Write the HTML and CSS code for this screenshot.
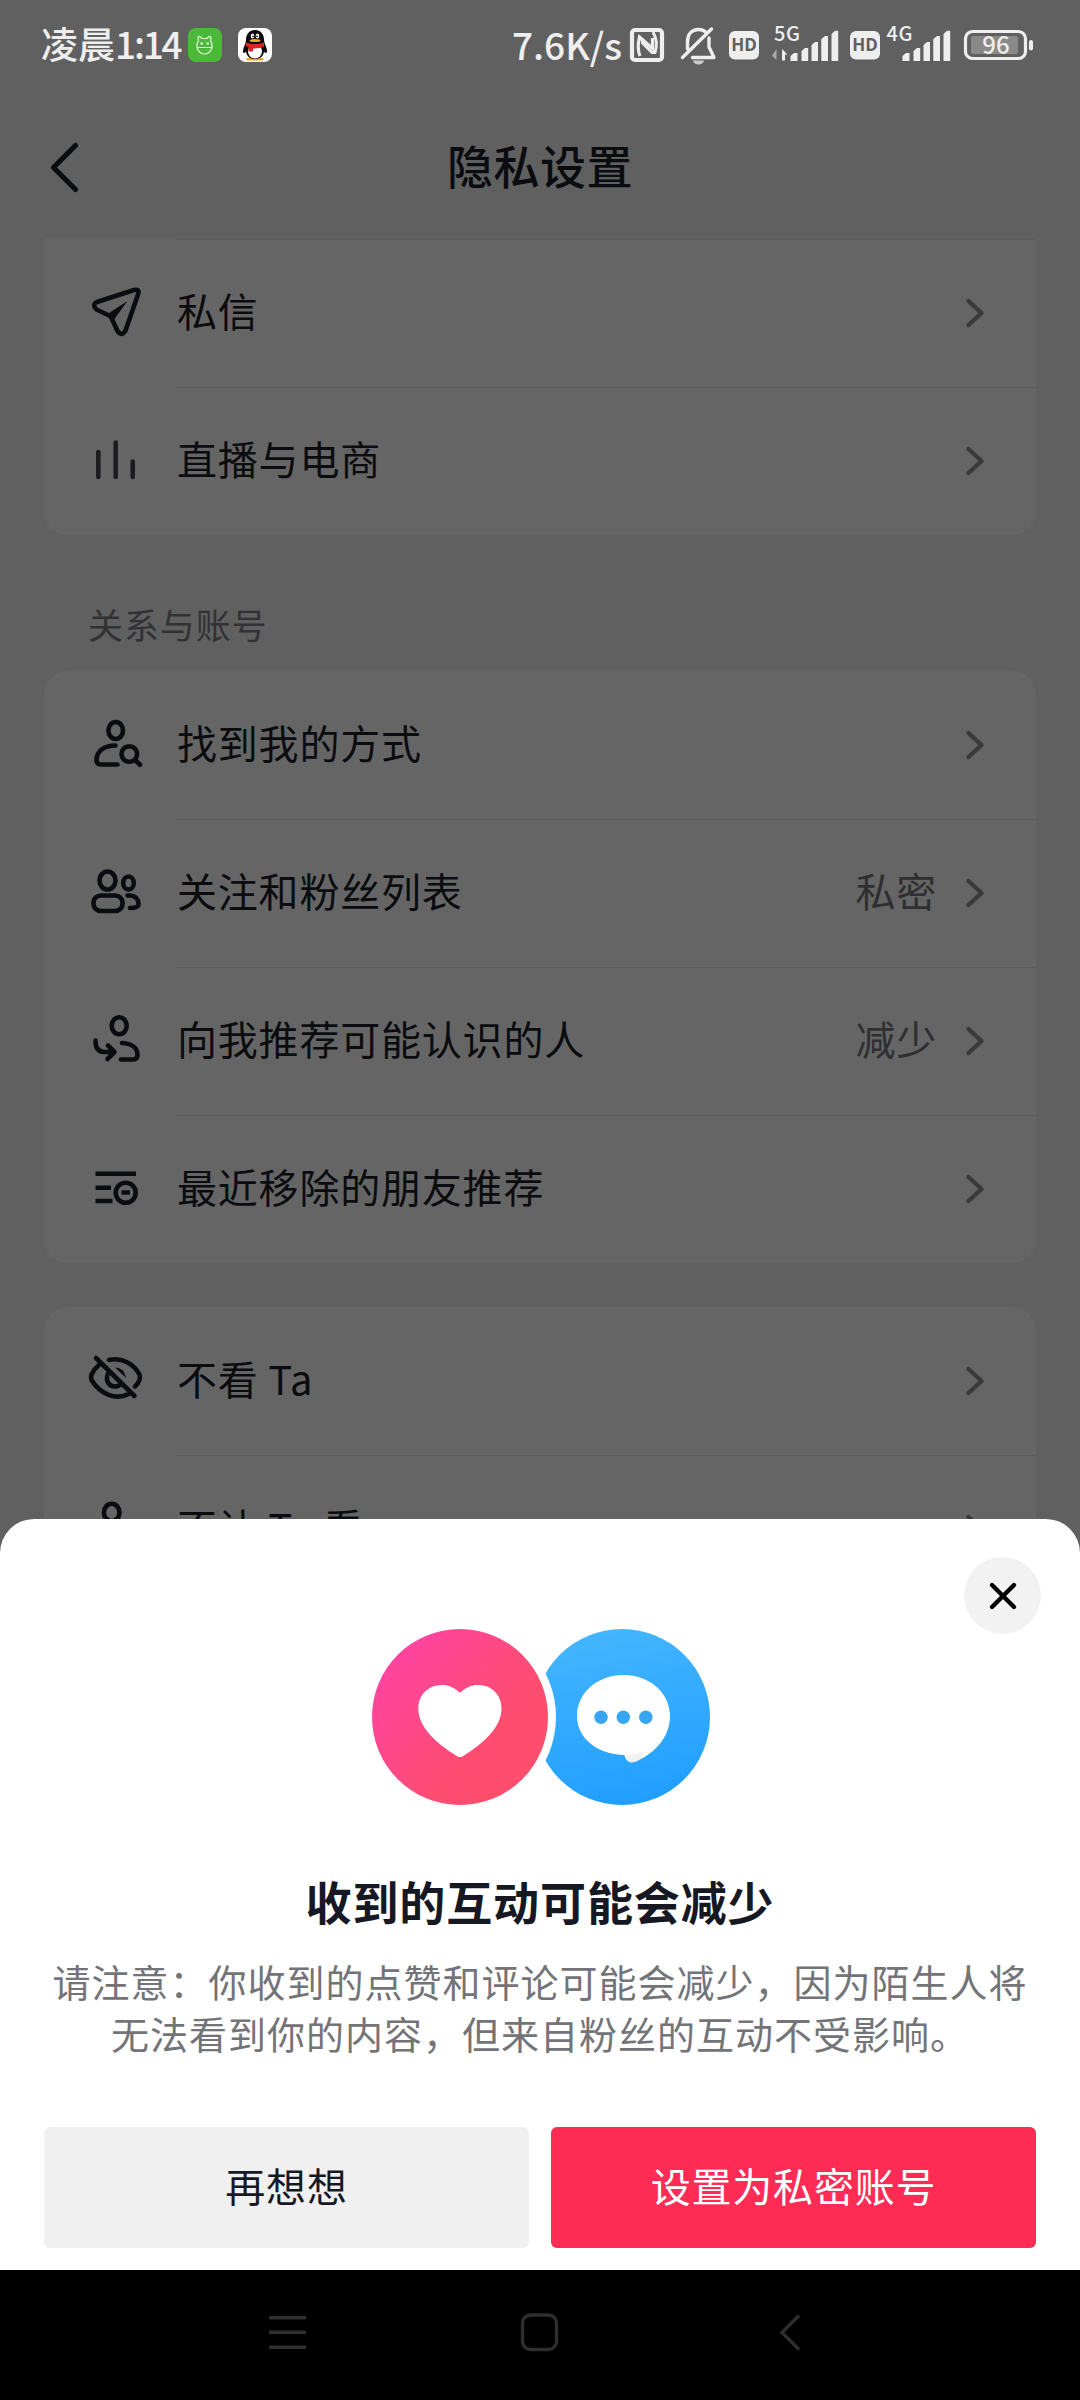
FILE: index.html
```html
<!DOCTYPE html>
<html lang="zh-CN">
<head>
<meta charset="utf-8">
<title>隐私设置</title>
<link rel="stylesheet" href="styles.css">
</head>
<body>
<div class="phone">
  <header class="status">
    <span class="time">凌晨<b>1:14</b></span>
    <svg class="app-icons" width="84" height="34" viewBox="188 28 84 34">
      <rect x="188" y="28" width="34" height="34" rx="8" fill="#4cb93a"/>
      <g fill="none" stroke="#e4fbdc" stroke-width="1.2">
        <path d="M198.500 40.500L198 37.500Q199 35.500 200.500 37L202 38.500H207L208.500 37Q210 35.500 211 37.500L210.500 40.500Q213 45 211.500 49Q209 54 204.500 54Q200 54 197.500 49Q196 45 198.500 40.500ZM197 47.500H212"/>
        <path d="M200.500 43.500h2.400M206.500 43.500h2.400" stroke-width="2"/>
      </g>
      <rect x="238" y="28" width="34" height="34" rx="8" fill="#fff"/>
      <path d="M246 59Q247 57 255 58.500Q263 57 264 59L263 60.500H247Z" fill="#efa52f"/>
      <path d="M255 30C249 30 246 34.500 246 40C246 44 243 47 243 51C243 53 244 54 246 51.500C247 57 250 59 255 59C260 59 263 57 264 51.500C266 54 267 53 267 51C267 47 264 44 264 40C264 34.500 261 30 255 30Z" fill="#080808"/>
      <ellipse cx="255" cy="51.500" rx="7" ry="7" fill="#fff"/>
      <path d="M246 42.500Q255 46 264 42.500V46.500Q259 49 253 48.500V51.500H248.500V47L245.500 46Z" fill="#dd2427"/>
      <ellipse cx="252.500" cy="36" rx="1.800" ry="2.600" fill="#fff"/><ellipse cx="257.500" cy="36" rx="1.800" ry="2.600" fill="#fff"/>
      <circle cx="253" cy="36.400" r=".8"/><circle cx="257" cy="36.400" r=".8"/>
      <ellipse cx="255" cy="40.500" rx="5.500" ry="1.600" fill="#f0a52b"/>
    </svg>
    <span class="speed">7.6K/s</span>
    <svg class="indicators" width="140" height="90" viewBox="628 0 140 90">
      <rect x="632" y="30" width="30" height="30" rx="3" fill="none" stroke="#eee" stroke-width="4.200"/>
      <path d="M640 56C637.500 50 638 43 639.500 37L652.500 48.500V38" fill="none" stroke="#eee" stroke-width="3.200"/>
      <path d="M642.500 38.500V43L652 52.500H655C657.500 45 656.500 38 653 32" fill="none" stroke="#eee" stroke-width="3"/>
      <g fill="none" stroke="#eee" stroke-width="3.400" stroke-linecap="round" stroke-linejoin="round">
        <path d="M687.500 49V42C687.500 34 692 29.500 698.500 29.500C701 29.500 704 30.500 705.500 32M709 38V47L714 57.500H692.500"/>
        <path d="M711.500 29L682.500 57.500"/>
      </g>
      <path d="M693 60.500H704Q703 64.500 698.500 64.500T693 60.500Z" fill="#ccc"/>
      <rect x="729" y="31" width="30" height="28.500" rx="6" fill="#eee"/>
      <text class="hd" x="744" y="51" text-anchor="middle">HD</text>
    </svg>
    <svg class="signal" width="270" height="90" viewBox="768 0 270 90">
      <text class="net" x="774" y="41" textLength="26">5G</text>
      <path d="M776.500 49V60L772 55.500Z" fill="#aaa"/><path d="M782 60.500V49L787.500 54.500H785V60.500Z" fill="#eee"/>
      <path fill="#eee" d="M790.500 61V56L794 53H797.500V61ZM801.500 61V51L805 48H808.200V61ZM811.500 61V45L815 42H818V61ZM821.300 61V39L825 36H828V61ZM831.500 61V34L835 30.700H838.200V61Z"/>
      <rect x="850" y="31" width="30" height="28.500" rx="6" fill="#eee"/>
      <text class="hd" x="865" y="51" text-anchor="middle">HD</text>
      <text class="net" x="886.500" y="41" textLength="26">4G</text>
      <path fill="#eee" transform="translate(112 0)" d="M790.500 61V56L794 53H797.500V61ZM801.500 61V51L805 48H808.200V61ZM811.500 61V45L815 42H818V61ZM821.300 61V39L825 36H828V61ZM831.500 61V34L835 30.700H838.200V61Z"/>
      <rect x="965.500" y="31.500" width="60" height="27" rx="7" fill="none" stroke="#eee" stroke-width="3.200"/>
      <rect x="971" y="36" width="47" height="18" rx="2.500" fill="#898989"/>
      <rect x="1029" y="40" width="4" height="10.500" rx="2" fill="#eee"/>
      <text class="level" x="996" y="54" text-anchor="middle">96</text>
    </svg>
  </header>

  <div class="topbar">
    <svg class="back" width="36" height="56" viewBox="46 140 36 56"><path d="M75.500 145.500L53.500 167.500L75.500 189.500"/></svg>
    <h1>隐私设置</h1>
  </div>

  <main>
    <section class="card continued">
      <div class="row">
        <svg class="icon" viewBox="80 277 72 72"><path d="M97 302L134 290Q140 288.500 138 294.500L125.500 330.500Q122 337 117.500 331L112 319Q111.500 316.500 109 315.500L96.500 309.500Q91.500 305 97 302Z"/><path class="solid" d="M107.500 314L127.500 301L113 321Z"/></svg>
        <div class="body"><span>私信</span><svg class="go" viewBox="0 0 22 34"><path d="M4.500 5L17.500 17L4.500 29"/></svg></div>
      </div>
      <div class="row">
        <svg class="icon faint" viewBox="80 425 72 72"><path d="M98.300 452V477M115.700 442.500V477M132.700 461.500V477"/></svg>
        <div class="body"><span>直播与电商</span><svg class="go" viewBox="0 0 22 34"><path d="M4.500 5L17.500 17L4.500 29"/></svg></div>
      </div>
    </section>

    <h2>关系与账号</h2>

    <section class="card">
      <div class="row">
        <svg class="icon" viewBox="80 709 72 72"><ellipse cx="115.700" cy="730.500" rx="7.300" ry="8.500"/><path d="M115.500 745.500C103 745.500 96.500 752 96.500 760Q96.500 764.500 101 764.500H117.500"/><circle cx="129.300" cy="754" r="7.800"/><path d="M135 760L140 764.700"/></svg>
        <div class="body"><span>找到我的方式</span><svg class="go" viewBox="0 0 22 34"><path d="M4.500 5L17.500 17L4.500 29"/></svg></div>
      </div>
      <div class="row">
        <svg class="icon" viewBox="80 857 72 72"><ellipse cx="107.500" cy="880.500" rx="8" ry="9"/><ellipse cx="128.500" cy="883" rx="5.300" ry="6.500"/><rect x="93.500" y="895.500" width="29" height="15.500" rx="7.500" ry="7"/><path d="M127.500 895.500H130Q138.500 896 138.500 904.500Q138.500 908 130 908"/></svg>
        <div class="body"><span>关注和粉丝列表</span><em>私密</em><svg class="go" viewBox="0 0 22 34"><path d="M4.500 5L17.500 17L4.500 29"/></svg></div>
      </div>
      <div class="row">
        <svg class="icon" viewBox="80 1005 72 72"><ellipse cx="119.200" cy="1025.700" rx="7.500" ry="8.500"/><path d="M95.500 1040.500C95.500 1047 97.500 1052 104 1052H113.500M108 1045.500L114.500 1052L107.500 1059"/><path d="M122 1043C132 1043.500 137.500 1048 137.500 1055Q137.500 1059.500 133 1059.500H121"/></svg>
        <div class="body"><span>向我推荐可能认识的人</span><em>减少</em><svg class="go" viewBox="0 0 22 34"><path d="M4.500 5L17.500 17L4.500 29"/></svg></div>
      </div>
      <div class="row">
        <svg class="icon butt" viewBox="80 1153 72 72"><path d="M95.500 1173.700H136M95.500 1187.700H111M95.500 1201H112.500M121.500 1192.500H130"/><circle cx="125.700" cy="1192.700" r="10"/></svg>
        <div class="body"><span>最近移除的朋友推荐</span><svg class="go" viewBox="0 0 22 34"><path d="M4.500 5L17.500 17L4.500 29"/></svg></div>
      </div>
    </section>

    <section class="card">
      <div class="row">
        <svg class="icon" viewBox="80 1345 72 72"><path d="M96 1358L134.500 1396M99 1365Q94 1369 91.500 1374.500Q90.500 1377.500 91.500 1380C100 1394 116 1401 129.500 1393.500M109 1360C122 1357 134 1364 139.500 1374.500Q140.500 1377.500 139.500 1380Q138 1384 135 1386.500M108 1373.500C105 1381 109 1387 116 1386.500Q119 1386 121 1384"/><path class="solid" d="M115 1367.500Q124.500 1367.500 126 1378Z"/></svg>
        <div class="body"><span>不看 Ta</span><svg class="go" viewBox="0 0 22 34"><path d="M4.500 5L17.500 17L4.500 29"/></svg></div>
      </div>
      <div class="row">
        <svg class="icon" viewBox="80 1493 72 72"><ellipse cx="111.700" cy="1512.500" rx="7.800" ry="8.700"/><path d="M94 1546Q94 1528 111.700 1528T129 1546Z"/></svg>
        <div class="body"><span>不让 Ta 看</span><svg class="go" viewBox="0 0 22 34"><path d="M4.500 5L17.500 17L4.500 29"/></svg></div>
      </div>
    </section>
  </main>

  <section class="sheet">
    <button class="close" aria-label="关闭"><svg width="36" height="36" viewBox="0 0 36 36"><path d="M7 7L29 29M29 7L7 29"/></svg></button>
    <svg class="hero" width="340" height="178" viewBox="370 1628 340 178">
      <defs>
        <linearGradient id="pink" x1=".1" y1=".2" x2=".8" y2=".8"><stop offset="0" stop-color="#ff449f"/><stop offset=".75" stop-color="#ff4d71"/><stop offset="1" stop-color="#ff4d6d"/></linearGradient>
        <linearGradient id="blue" x1=".4" y1="0" x2=".6" y2="1"><stop offset="0" stop-color="#44b5ff"/><stop offset="1" stop-color="#209eff"/></linearGradient>
      </defs>
      <circle cx="622" cy="1717" r="88" fill="url(#blue)"/>
      <circle cx="460" cy="1717" r="96" fill="#fff"/>
      <circle cx="460" cy="1717" r="88" fill="url(#pink)"/>
      <path d="M460 1692.700C454 1687.500 449 1685 442 1685C428 1685 418.300 1695 418.300 1708.500C418.300 1727 436 1743 456 1755.500Q460 1758.500 464 1755.500C484 1743 501.500 1727 501.500 1708.500C501.500 1695 492 1685 478 1685C471 1685 466 1687.500 460 1692.700Z" fill="#fff"/>
      <path d="M623.500 1675C650 1675 670 1693 670 1716C670 1737 655 1753 636 1761.500C631 1763.500 626 1762 624.500 1755C597 1754.500 577 1738 577 1716C577 1693 597 1675 623.500 1675Z" fill="#fff"/>
      <path d="M624.500 1755Q636 1755 642 1751Q646 1756 636 1761.500C631 1763.500 626 1762 624.500 1755Z" fill="#f2f2f2"/>
      <g fill="#38a5f3"><circle cx="601" cy="1717.300" r="6.700"/><circle cx="623.300" cy="1717.300" r="6.700"/><circle cx="645.800" cy="1717.300" r="6.700"/></g>
    </svg>
    <h3>收到的互动可能会减少</h3>
    <p>请注意：你收到的点赞和评论可能会减少，因为陌生人将<br>无法看到你的内容，但来自粉丝的互动不受影响。</p>
    <div class="actions">
      <button class="btn">再想想</button>
      <button class="btn primary">设置为私密账号</button>
    </div>
  </section>

  <nav class="navbar">
    <svg width="1080" height="130" viewBox="0 2270 1080 130">
      <path d="M269 2317.700H306M269 2332.300H306M269 2347.300H306"/>
      <rect x="522.500" y="2315" width="34" height="34.500" rx="8"/>
      <path d="M799 2315.500L782 2332.500L799 2349.500"/>
    </svg>
  </nav>
</div>
</body>
</html>
```
FILE: styles.css
```css
* { box-sizing: border-box; }
body {
  margin: 0;
  font-family: "Noto Sans CJK SC", sans-serif;
}
h1, h2, h3, p { margin: 0; font-weight: 400; }
button { border: 0; padding: 0; font: inherit; }
svg { display: block; flex: none; }

.phone {
  position: relative;
  width: 1080px;
  height: 2400px;
  overflow: hidden;
  background: #606060;
  color: #0b0c10;
}

.status {
  display: flex;
  align-items: center;
  height: 90px;
  padding-left: 41px;
  color: #eee;
  font-weight: 500;
  white-space: nowrap;
}
.time { width: 147px; padding-bottom: 4px; font-size: 37px; }
.time b { font-weight: 500; letter-spacing: -2.2px; }
.speed {
  width: 116px;
  margin-left: 240px;
  padding-bottom: 3px;
  font-size: 37px;
}
.hd { font: 700 17px "Open Sans", sans-serif; fill: #606060; }
.net { font: 500 20px "Noto Sans CJK SC", sans-serif; fill: #eee; }
.level { font: 500 24px "Noto Sans CJK SC", sans-serif; fill: #eee; }

.topbar {
  display: grid;
  grid-template-columns: 46px 36px 1fr 82px;
  align-items: center;
  height: 149px;
  padding-top: 6px;
}
.back { grid-column: 2; }
.back path { fill: none; stroke: #0b0c10; stroke-width: 5.2; stroke-linecap: round; stroke-linejoin: round; }
h1 {
  padding-bottom: 7px;
  font-size: 46px;
  line-height: 60px;
  font-weight: 500;
  letter-spacing: 0.5px;
  text-align: center;
}

main { padding: 0 44px; }
.card {
  background: #656565;
  border-radius: 24px;
}
.card + .card { margin-top: 44px; }
.card.continued { border-radius: 0 0 24px 24px; }
.row { display: flex; align-items: center; height: 148px; padding-left: 36px; }
.icon {
  width: 72px;
  height: 72px;
  margin-right: 24px;
  fill: none;
  stroke: #0b0c10;
  stroke-width: 4.6;
  stroke-linecap: round;
  stroke-linejoin: round;
}
.icon.faint { stroke: #1c1c1e; }
.icon.butt { stroke-linecap: butt; }
.icon .solid { fill: #0b0c10; stroke: none; }
.body {
  flex: 1;
  display: flex;
  align-items: center;
  height: 148px;
  padding: 0 50px 1px 1px;
  border-top: 1px solid #5b5b5b;
  font-size: 40px;
  letter-spacing: 0.8px;
}
.card:not(.continued) .row:first-child .body { border-top-color: transparent; }
.body span { flex: 1; padding-bottom: 6px; }
.body em { font-style: normal; color: #2f2f31; margin-right: 27px; padding-bottom: 6px; }
.go { width: 22px; height: 34px; fill: none; stroke: #3a3a3b; stroke-width: 4.4; stroke-linecap: round; stroke-linejoin: round; }
h2 {
  height: 136px;
  padding: 64px 0 0 44px;
  font-size: 35px;
  line-height: 50px;
  letter-spacing: 0.9px;
  color: #323234;
}

.sheet {
  position: absolute;
  left: 0;
  right: 0;
  top: 1519px;
  height: 751px;
  display: flex;
  flex-direction: column;
  align-items: center;
  padding: 38px 44px 22px;
  background: #fff;
  border-radius: 34px 34px 0 0;
}
.close {
  align-self: flex-end;
  display: grid;
  place-items: center;
  width: 77px;
  height: 77px;
  margin-right: -5px;
  border-radius: 50%;
  background: #f2f2f2;
}
.close path { stroke: #050505; stroke-width: 4.4; stroke-linecap: round; }
.hero { margin-top: -6px; }
h3 {
  margin-top: 64px;
  font-size: 46px;
  line-height: 60px;
  font-weight: 700;
  letter-spacing: 0.9px;
  color: #161823;
}
p {
  margin-top: 25px;
  font-size: 38px;
  line-height: 52px;
  letter-spacing: 1px;
  color: #737478;
  text-align: center;
  white-space: nowrap;
}
.actions {
  display: grid;
  grid-template-columns: 1fr 1fr;
  gap: 22px;
  width: 100%;
  height: 121px;
  margin-top: auto;
}
.btn {
  padding-bottom: 5px;
  border-radius: 6px;
  background: #f0f0f0;
  color: #161823;
  font-size: 40px;
  letter-spacing: 0.8px;
}
.btn.primary { background: #fe2c55; color: #fff; }

.navbar {
  position: absolute;
  left: 0;
  bottom: 0;
  background: #000;
}
.navbar svg { fill: none; stroke: #2e2e2e; stroke-width: 3.4; }
```
